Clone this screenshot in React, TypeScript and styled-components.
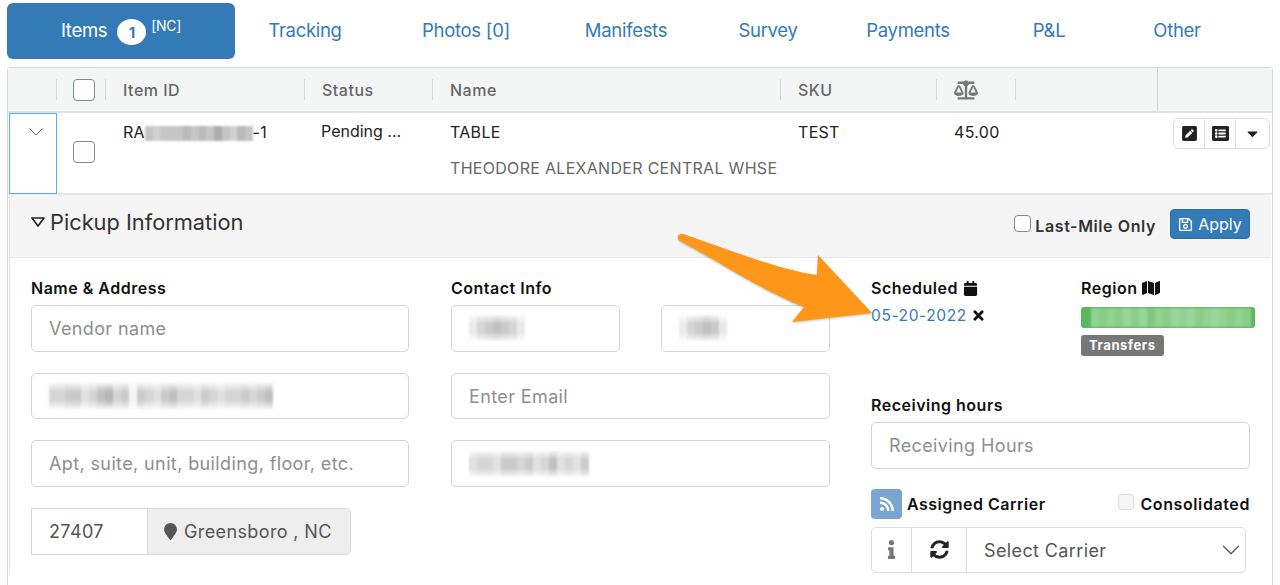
import React from 'react';
import styled, { createGlobalStyle } from 'styled-components';
import {
  FaBalanceScale,
  FaCalendar,
  FaCaretDown,
  FaInfo,
  FaListAlt,
  FaMap,
  FaMapMarker,
  FaPenSquare,
  FaRegSave,
  FaRss,
  FaSyncAlt,
  FaTimes,
} from 'react-icons/fa';
import { ChevronDown } from 'lucide-react';

const GlobalStyle = createGlobalStyle`
  html, body {
    margin: 0;
    padding: 0;
    background: #fff;
    font-family: Inter, "Liberation Sans", sans-serif;
    color: #222;
    overflow: hidden;
  }
`;

const Page = styled.div`
  position: relative;
  width: 1280px;
  height: 585px;
  overflow: hidden;
  padding: 3px 7px 0;
  box-sizing: border-box;
`;

const TabBar = styled.nav`
  display: grid;
  grid-template-columns: 228px 140px 182px 138px 146px 134px 148px 108px;
  height: 56px;
  margin-bottom: 8px;
`;

const Tab = styled.a<{ $active?: boolean }>`
  display: flex;
  align-items: center;
  justify-content: center;
  padding-bottom: 2px;
  box-sizing: border-box;
  border-radius: 6px;
  font-size: 18.5px;
  letter-spacing: -0.3px;
  color: ${(p) => (p.$active ? '#fff' : '#337ab7')};
  background: ${(p) => (p.$active ? '#337ab7' : 'transparent')};
`;

const CountBadge = styled.span`
  display: inline-flex;
  align-items: center;
  justify-content: center;
  width: 29px;
  height: 26px;
  margin: 4px 5px 0 10px;
  border-radius: 50%;
  background: #fff;
  color: #337ab7;
  font-size: 15px;
  font-weight: 700;
`;

const StateTag = styled.sup`
  font-size: 14px;
  line-height: 1;
  margin-bottom: 8px;
`;

const Table = styled.div`
  border: 1px solid #d6d8d8;
  border-bottom: 0;
  border-radius: 4px 4px 0 0;
  height: 530px;
`;

const Columns = styled.div`
  display: grid;
  grid-template-columns: 49px 49px 199px 128px 348px 156px 79px 141px 1fr;
`;

const HeaderRow = styled(Columns)`
  height: 43px;
  background: #f4f6f6;
  border-bottom: 2px solid #dee2e2;
`;

const HeaderCell = styled.div<{ $last?: boolean; $center?: boolean }>`
  display: flex;
  align-items: center;
  justify-content: ${(p) => (p.$center ? 'center' : 'flex-start')};
  padding-left: ${(p) => (p.$center ? 4 : 17)}px;
  padding-top: 1px;
  font-size: 16px;
  font-weight: 500;
  letter-spacing: 0.5px;
  color: #666;
  position: relative;
  &::after {
    content: ${(p) => (p.$last ? 'none' : "''")};
    position: absolute;
    right: 0;
    top: 11px;
    height: 21px;
    width: 1px;
    background: #d6d9d9;
  }
`;

const ActionsHead = styled.div`
  border-left: 1px solid #cfd5d8;
`;

const CheckBox = styled.span<{ $size?: number; $muted?: boolean }>`
  display: inline-block;
  flex: none;
  box-sizing: border-box;
  width: ${(p) => p.$size ?? 22}px;
  height: ${(p) => p.$size ?? 22}px;
  border: 1.5px solid ${(p) => (p.$muted ? '#dcdcdc' : '#7f8a8c')};
  border-radius: 4px;
  background: ${(p) => (p.$muted ? '#f6f6f6' : '#fff')};
`;

const ItemRow = styled(Columns)`
  height: 80px;
  border-bottom: 2px solid #e6e8e8;
  font-size: 16px;
  letter-spacing: 0.3px;
  color: #222;
`;

const ToggleCell = styled.div`
  margin-left: 1px;
  box-sizing: border-box;
  border: 1px solid #5aaef2;
  padding: 6px 0 0 14px;
  color: #666;
  height: 81px;
`;

const CheckCell = styled.div`
  padding: 28px 0 0 16px;
`;

const TextCell = styled.div`
  padding: 10px 0 0 17px;
  line-height: 19px;
  white-space: nowrap;
`;

const StatusCell = styled(TextCell)`
  padding: 9px 0 0 16px;
  letter-spacing: 0;
`;

const SubLine = styled.div`
  margin-top: 17px;
  color: #666;
`;

const Masked = styled.span<{ $h: number }>`
  display: inline-flex;
  vertical-align: middle;
  height: ${(p) => p.$h}px;
  filter: blur(1px);
`;

type MaskTone = 'soft' | 'flat' | 'green';

const maskFills: Record<MaskTone, string> = {
  soft: 'linear-gradient(rgba(150,150,150,0.2), #969696 35%, #969696 65%, rgba(150,150,150,0.15))',
  flat: '#8c8c8c',
  green: '#b5e3b5',
};

const MaskCell = styled.span<{ $w: number; $tone: MaskTone }>`
  display: block;
  width: ${(p) => p.$w}px;
  background: ${(p) => maskFills[p.$tone]};
`;

const ActionGroup = styled.div`
  display: flex;
  width: 97px;
  height: 31px;
  margin: 5px 0 0 16px;
  border: 1px solid #dcdfe0;
  border-radius: 6px;
  box-sizing: border-box;
`;

const ActionButton = styled.button<{ $w: number }>`
  display: flex;
  align-items: center;
  justify-content: center;
  width: ${(p) => p.$w}px;
  padding: 0;
  background: none;
  border: 0;
  color: #222;
  font-size: 17px;
  & + & {
    border-left: 1px solid #dcdfe0;
  }
`;

const Panel = styled.section`
  margin-left: 1px;
  margin-right: 1px;
  border-left: 1px solid #e4e6e6;
`;

const PanelHead = styled.header`
  display: flex;
  align-items: center;
  height: 63px;
  box-sizing: border-box;
  padding: 0 21px 4px 21px;
  background: #f5f5f5;
  border-bottom: 1px solid #e7e7e7;
  border-radius: 4px 4px 0 0;
`;

const PanelTitle = styled.h2`
  display: flex;
  align-items: center;
  gap: 5px;
  margin: -4px 0 0;
  font-size: 21.8px;
  font-weight: 400;
  color: #333;
`;

const LastMile = styled.label`
  display: flex;
  align-items: center;
  gap: 4px;
  margin: 0 14px 0 auto;
  padding-top: 4px;
  font-size: 16px;
  font-weight: 600;
  letter-spacing: 0.6px;
  color: #333;
  & > span {
    margin-top: -6px;
  }
`;

const ApplyButton = styled.button`
  display: flex;
  align-items: center;
  justify-content: center;
  gap: 5px;
  width: 80px;
  height: 30px;
  padding: 0;
  border: 1px solid #2e6da4;
  border-radius: 4px;
  background: #337ab7;
  color: #fff;
  font: 400 16px Inter, sans-serif;
`;

const PanelBody = styled.div`
  display: grid;
  grid-template-columns: 420px 420px 1fr;
  padding: 20px 0 0 21px;
`;

const BodyColumn = styled.div<{ $w: number }>`
  width: ${(p) => p.$w}px;
`;

const FieldLabel = styled.label`
  display: flex;
  align-items: center;
  gap: 5px;
  height: 20px;
  font-size: 16px;
  font-weight: 600;
  letter-spacing: 0.5px;
  color: #111;
  margin-bottom: 7px;
  white-space: nowrap;
`;

const Field = styled.div`
  display: flex;
  align-items: center;
  height: 46.5px;
  box-sizing: border-box;
  padding: 0 17px;
  border: 1px solid #d4d6d6;
  border-radius: 5px;
  font-size: 18px;
  letter-spacing: 0.38px;
  color: #8e8e8e;
  white-space: nowrap;
`;

const FieldStack = styled.div`
  display: flex;
  flex-direction: column;
  gap: 21px;
  & > ${Field} {
    padding-top: 1px;
  }
`;

const NameRow = styled.div`
  display: flex;
  gap: 41px;
  & > * {
    flex: 1;
  }
`;

const ZipGroup = styled.div`
  display: flex;
  width: 320px;
  height: 47px;
`;

const ZipInput = styled(Field)`
  flex: none;
  width: 116px;
  height: 47px;
  color: #555;
  border-radius: 0;
  border-right: 0;
`;

const CityAddon = styled.div`
  display: flex;
  align-items: center;
  gap: 5px;
  flex: 1;
  padding-left: 14px;
  background: #eee;
  border: 1px solid #d8d8d8;
  border-radius: 0 5px 5px 0;
  font-size: 18px;
  letter-spacing: 0.38px;
  color: #555;
`;

const ScheduleGrid = styled.div`
  display: grid;
  grid-template-columns: 210px 174px;
  height: 117px;
`;

const DateLine = styled.div`
  display: flex;
  align-items: center;
  gap: 4px;
  margin-top: 8px;
  font-size: 15.5px;
  letter-spacing: 0.6px;
  color: #337ab7;
  svg {
    color: #111;
  }
`;

const RegionBar = styled.div`
  display: flex;
  align-items: center;
  height: 21px;
  margin-top: 9px;
  padding-left: 10px;
  background: #5cb85c;
  border-radius: 3px;
`;

const TypeBadge = styled.span`
  display: inline-block;
  margin-top: 7px;
  padding: 0 8px;
  height: 21px;
  line-height: 21px;
  background: #777;
  border-radius: 3px;
  color: #fff;
  font-size: 13px;
  font-weight: 700;
  letter-spacing: 0.6px;
`;

const CarrierHead = styled.div`
  display: flex;
  align-items: center;
  gap: 5px;
  height: 31px;
  margin-top: 20px;
  font-size: 16px;
  font-weight: 600;
  letter-spacing: 0.5px;
  color: #111;
`;

const RssButton = styled.span`
  display: flex;
  align-items: center;
  justify-content: center;
  width: 31px;
  height: 30px;
  border-radius: 4px;
  background: #7ba6d1;
  color: #fff;
  font-size: 16px;
`;

const ConsolidatedLabel = styled.label`
  display: flex;
  align-items: center;
  gap: 6px;
  margin-left: auto;
  letter-spacing: 0.6px;
  & > span {
    margin-top: -5px;
  }
`;

const CarrierGroup = styled.div`
  display: flex;
  width: 375px;
  height: 46px;
  margin-top: 7px;
  border: 1px solid #dcdedf;
  border-radius: 5px;
  box-sizing: border-box;
`;

const CarrierAddon = styled.span<{ $w: number; $color: string }>`
  display: flex;
  align-items: center;
  justify-content: center;
  flex: none;
  width: ${(p) => p.$w}px;
  border-right: 1px solid #dcdedf;
  color: ${(p) => p.$color};
  font-size: 19px;
`;

const CarrierSelect = styled.div`
  display: flex;
  align-items: center;
  justify-content: space-between;
  flex: 1;
  padding: 1px 0 0 17px;
  font-size: 18px;
  letter-spacing: 0.38px;
  color: #555;
  svg {
    margin-right: -1px;
  }
`;

const Arrow = styled.svg`
  position: absolute;
  left: 0;
  top: 0;
  width: 1280px;
  height: 585px;
  pointer-events: none;
  filter: drop-shadow(0 1px 1px rgba(0, 0, 0, 0.25));
`;

type MosaicProps = {
  pattern: string;
  height?: number;
  cell?: number;
  tone?: MaskTone;
};

// redacted text in the shot is a coarse mosaic, one digit per cell
const Mosaic = ({ pattern, height = 26, cell = 8, tone = 'soft' }: MosaicProps) => (
  <Masked $h={height}>
    {pattern.split('').map((c, i) => (
      <MaskCell key={i} $w={cell} $tone={tone} style={{ opacity: Number(c) / 10 }} />
    ))}
  </Masked>
);

const PanelCaret = () => (
  <svg width="14" height="10" viewBox="0 0 14 10">
    <path d="M1 1h12L7 9z" fill="none" stroke="#222" strokeWidth="1.6" strokeLinejoin="round" />
  </svg>
);

const App = (): JSX.Element => {
  return (
    <Page>
      <GlobalStyle />
      <TabBar>
        <Tab $active>
          Items<CountBadge>1</CountBadge>
          <StateTag>[NC]</StateTag>
        </Tab>
        <Tab>Tracking</Tab>
        <Tab>Photos [0]</Tab>
        <Tab>Manifests</Tab>
        <Tab>Survey</Tab>
        <Tab>Payments</Tab>
        <Tab>P&amp;L</Tab>
        <Tab>Other</Tab>
      </TabBar>

      <Table>
        <HeaderRow>
          <HeaderCell />
          <HeaderCell $center>
            <CheckBox />
          </HeaderCell>
          <HeaderCell>Item ID</HeaderCell>
          <HeaderCell>Status</HeaderCell>
          <HeaderCell>Name</HeaderCell>
          <HeaderCell>SKU</HeaderCell>
          <HeaderCell>
            <FaBalanceScale size={24} color="#777" />
          </HeaderCell>
          <HeaderCell $last />
          <ActionsHead />
        </HeaderRow>

        <ItemRow>
          <ToggleCell>
            <ChevronDown size={24} strokeWidth={1} />
          </ToggleCell>
          <CheckCell>
            <CheckBox />
          </CheckCell>
          <TextCell>
            RA
            <Mosaic pattern="54555656575465" height={15} cell={7.7} tone="flat" />
            -1
          </TextCell>
          <StatusCell>Pending ...</StatusCell>
          <TextCell>
            TABLE
            <SubLine>THEODORE ALEXANDER CENTRAL WHSE</SubLine>
          </TextCell>
          <TextCell>TEST</TextCell>
          <TextCell>45.00</TextCell>
          <div />
          <ActionGroup>
            <ActionButton $w={30}>
              <FaPenSquare />
            </ActionButton>
            <ActionButton $w={31}>
              <FaListAlt />
            </ActionButton>
            <ActionButton $w={34}>
              <FaCaretDown />
            </ActionButton>
          </ActionGroup>
        </ItemRow>

        <Panel>
          <PanelHead>
            <PanelTitle>
              <PanelCaret />
              Pickup Information
            </PanelTitle>
            <LastMile>
              <CheckBox $size={17} />
              Last-Mile Only
            </LastMile>
            <ApplyButton>
              <FaRegSave size={15} />
              Apply
            </ApplyButton>
          </PanelHead>

          <PanelBody>
            <BodyColumn $w={378}>
              <FieldLabel>Name &amp; Address</FieldLabel>
              <FieldStack>
                <Field>Vendor name</Field>
                <Field>
                  <Mosaic pattern="4455346745154356443543445456" />
                </Field>
                <Field>Apt, suite, unit, building, floor, etc.</Field>
                <ZipGroup>
                  <ZipInput>27407</ZipInput>
                  <CityAddon>
                    <FaMapMarker size={17} />
                    Greensboro , NC
                  </CityAddon>
                </ZipGroup>
              </FieldStack>
            </BodyColumn>

            <BodyColumn $w={379}>
              <FieldLabel>Contact Info</FieldLabel>
              <FieldStack>
                <NameRow>
                  <Field>
                    <Mosaic pattern="2456542" />
                  </Field>
                  <Field>
                    <Mosaic pattern="245652" />
                  </Field>
                </NameRow>
                <Field>Enter Email</Field>
                <Field>
                  <Mosaic pattern="344355453463435" />
                </Field>
              </FieldStack>
            </BodyColumn>

            <BodyColumn $w={379}>
              <ScheduleGrid>
                <div>
                  <FieldLabel>
                    Scheduled <FaCalendar size={15} />
                  </FieldLabel>
                  <DateLine>
                    05-20-2022 <FaTimes size={15} />
                  </DateLine>
                </div>
                <div>
                  <FieldLabel>
                    Region <FaMap size={18} />
                  </FieldLabel>
                  <RegionBar>
                    <Mosaic pattern="65657574657675676565" height={19} tone="green" />
                  </RegionBar>
                  <TypeBadge>Transfers</TypeBadge>
                </div>
              </ScheduleGrid>
              <FieldLabel>Receiving hours</FieldLabel>
              <Field>Receiving Hours</Field>
              <CarrierHead>
                <RssButton>
                  <FaRss />
                </RssButton>
                Assigned Carrier
                <ConsolidatedLabel>
                  <CheckBox $size={16} $muted />
                  Consolidated
                </ConsolidatedLabel>
              </CarrierHead>
              <CarrierGroup>
                <CarrierAddon $w={39} $color="#777">
                  <FaInfo />
                </CarrierAddon>
                <CarrierAddon $w={54} $color="#222">
                  <FaSyncAlt />
                </CarrierAddon>
                <CarrierSelect>
                  Select Carrier
                  <ChevronDown size={30} strokeWidth={1} />
                </CarrierSelect>
              </CarrierGroup>
            </BodyColumn>
          </PanelBody>
        </Panel>
      </Table>

      <Arrow viewBox="0 0 1280 585">
        <path
          d="M683 234 C730 250 780 270 817 275 L818 255 L872 313 L792 322 L804 307 C760 290 720 262 680 241 C676 238 678 233 683 234 Z"
          fill="#fd9619"
        />
      </Arrow>
    </Page>
  );
};

export default App;
